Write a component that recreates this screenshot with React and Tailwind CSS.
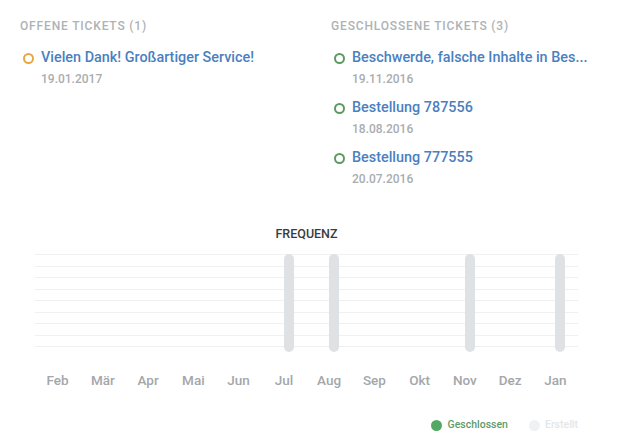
const open = [{ title: "Vielen Dank! Großartiger Service!", date: "19.01.2017" }];
const closed = [
  { title: "Beschwerde, falsche Inhalte in Bes...", date: "19.11.2016" },
  { title: "Bestellung 787556", date: "18.08.2016" },
  { title: "Bestellung 777555", date: "20.07.2016" },
];
const months = ["Feb", "Mär", "Apr", "Mai", "Jun", "Jul", "Aug", "Sep", "Okt", "Nov", "Dez", "Jan"];
const bars = [false, false, false, false, false, true, true, false, false, true, false, true];

function Ticket({ title, date, ring }) {
  return (
    <div className="flex items-start gap-[7px] h-[50px]">
      <span className={`mt-[4px] ml-[3px] w-[11px] h-[11px] rounded-full border-[2.5px] ${ring}`} />
      <div className="flex flex-col">
        <span className="text-[14.4px] leading-[18px] font-medium text-[#4b7fbf]">{title}</span>
        <span className="text-[12px] leading-[16px] mt-[4px] font-medium text-[#a9adb0]">{date}</span>
      </div>
    </div>
  );
}

export default function App() {
  return (
    <div className="w-[623px] h-[447px] bg-white font-['Roboto',sans-serif] overflow-hidden">
      <div className="flex pl-[20px] pt-[18px]">
        <div className="w-[311px]">
          <h3 className="text-[12px] leading-[16px] font-medium tracking-[0.07em] text-[#aeb2b5]">OFFENE TICKETS (1)</h3>
          <div className="mt-[15px]">
            {open.map((t) => (
              <Ticket key={t.title} {...t} ring="border-[#e9a83e]" />
            ))}
          </div>
        </div>
        <div>
          <h3 className="text-[12px] leading-[16px] font-medium tracking-[0.07em] text-[#aeb2b5]">GESCHLOSSENE TICKETS (3)</h3>
          <div className="mt-[15px]">
            {closed.map((t) => (
              <Ticket key={t.title} {...t} ring="border-[#5d9a63]" />
            ))}
          </div>
        </div>
      </div>

      <div className="ml-[35px] w-[543px] mt-[27px]">
        <div className="text-center text-[12.5px] leading-[16px] font-medium text-[#3a3d40]">FREQUENZ</div>
        <div className="relative mt-[12px] h-[98px]">
          <div className="flex flex-col gap-[10.5px]">
            {Array.from({ length: 9 }).map((_, i) => (
              <div key={i} className="h-px bg-[#eff0f1]" />
            ))}
          </div>
          <div className="absolute inset-0 grid grid-cols-12">
            {bars.map((b, i) => (
              <div key={i} className="flex justify-center pl-[10px]">
                {b && <div className="w-[10px] h-[98px] rounded-full bg-[#dfe2e5]" />}
              </div>
            ))}
          </div>
        </div>
        <div className="grid grid-cols-12 mt-[19px]">
          {months.map((m) => (
            <div key={m} className="text-center text-[13.5px] leading-[18px] font-medium text-[#a3a7aa]">{m}</div>
          ))}
        </div>
        <div className="flex justify-end items-center mt-[29px] text-[10.5px] leading-[14px]">
          <span className="w-[11px] h-[11px] rounded-full bg-[#55a765]" />
          <span className="ml-[6px] text-[#5f9a6c] font-medium">Geschlossen</span>
          <span className="ml-[21px] w-[11px] h-[11px] rounded-full bg-[#eff1f2]" />
          <span className="ml-[5px] text-[#e3e6e8] font-medium">Erstellt</span>
        </div>
      </div>
    </div>
  );
}
